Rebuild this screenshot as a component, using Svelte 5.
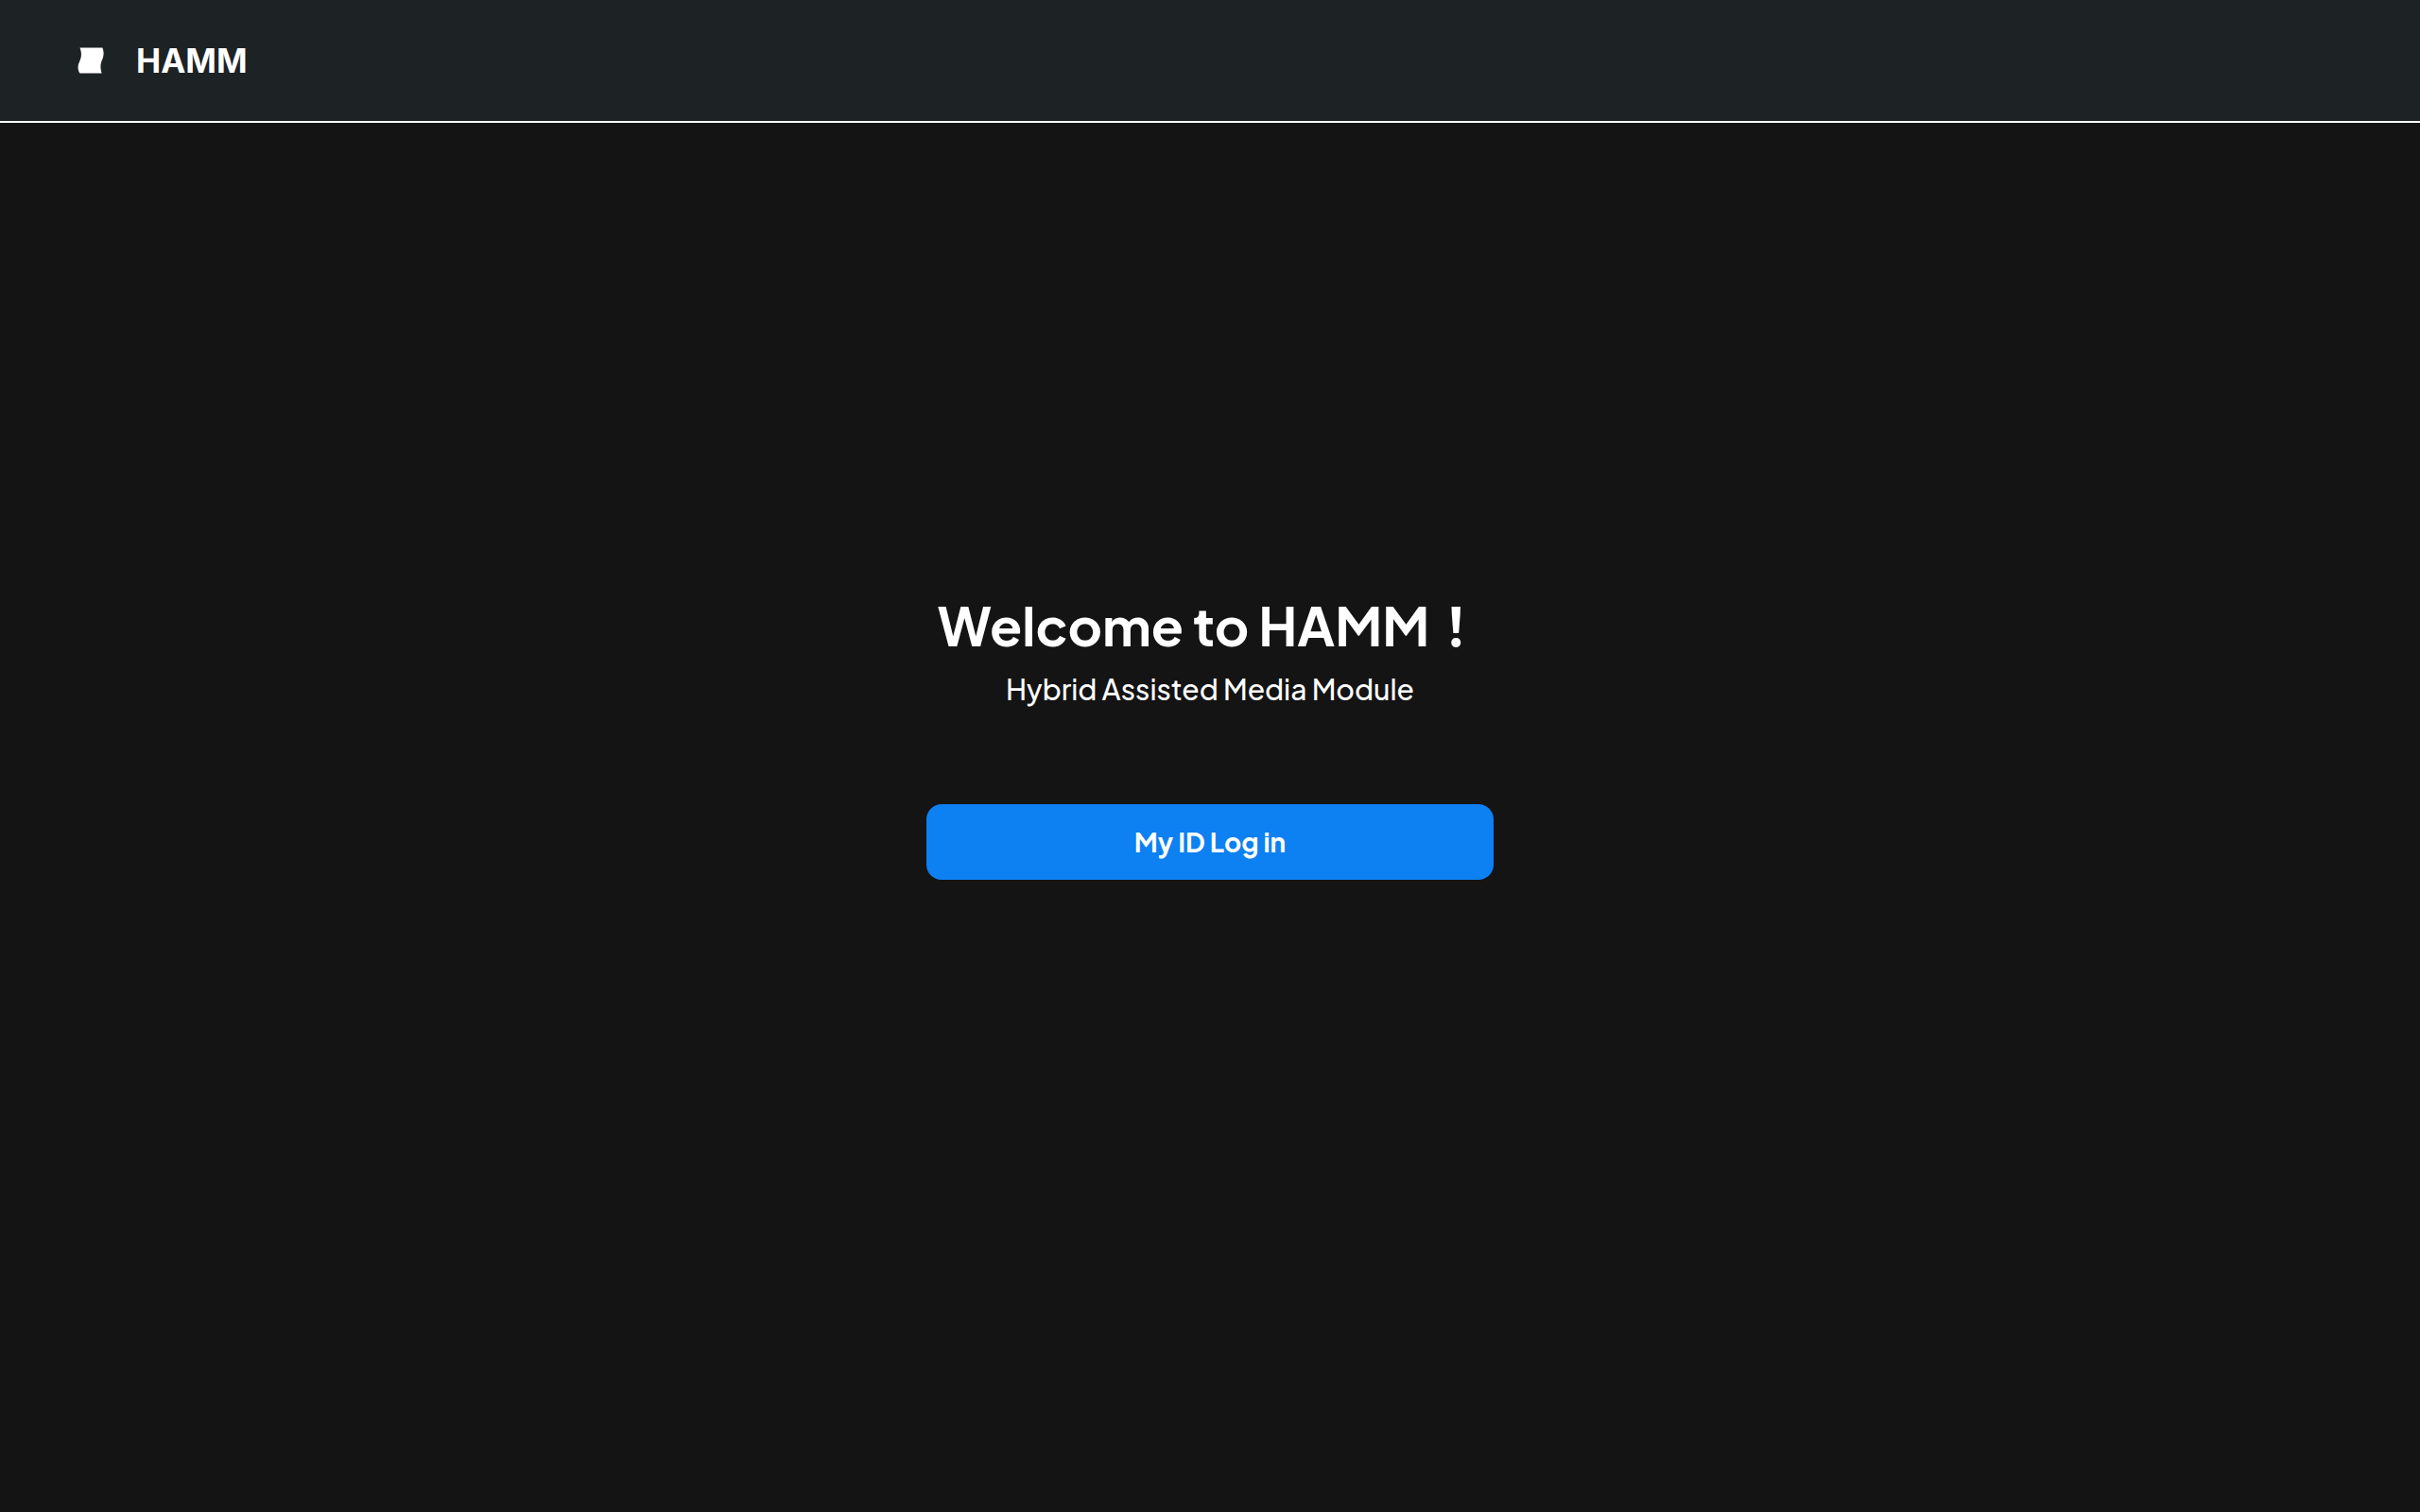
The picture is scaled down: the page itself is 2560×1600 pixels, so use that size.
<script lang="ts">
	const name = 'HAMM';
	const tagline = 'Hybrid Assisted Media Module';
</script>

<div class="page">
	<header class="header">
		<a class="brand" href="/">
			<svg class="brand__icon" viewBox="0 0 28 28" aria-hidden="true">
				<path
					fill="#fff"
					d="M2.5 .4H26.4C28 4.200 28 8 26.600 12C24.400 17 23.600 20.500 25.600 27.600H2.500C0 24 0 19.500 2 15.500C4.400 10 4.600 6 2.500 .4Z"
				/>
			</svg>
			<span>{name}</span>
		</a>
	</header>

	<main class="welcome">
		<h1 class="welcome__title">Welcome to {name}！</h1>
		<p class="welcome__tagline">{tagline}</p>
		<button class="login" type="button">My ID Log in</button>
	</main>
</div>

<style>
	:global(body) {
		background: #141414;
	}
	.page {
		display: flex;
		flex-direction: column;
		min-height: 100vh;
		color: #fff;
		font-family: 'Plus Jakarta Sans', Inter, 'Noto Sans CJK TC', sans-serif;
	}
	.header {
		display: flex;
		align-items: center;
		padding: 40px 82px;
		background: #1d2225;
		border-bottom: 2px solid #fff;
	}
	.brand {
		display: flex;
		align-items: center;
		gap: 34px;
		color: inherit;
		font-family: Inter, sans-serif;
		font-size: 35px;
		font-weight: 700;
		line-height: 48px;
		text-decoration: none;
	}
	.brand__icon {
		width: 28px;
		height: 28px;
	}
	.welcome {
		flex: 1;
		display: flex;
		flex-direction: column;
		align-items: center;
		justify-content: center;
		padding: 0 24px 176px;
	}
	.welcome__title {
		margin: 0;
		font-size: 56px;
		font-weight: 700;
		line-height: 76px;
	}
	.welcome__tagline {
		margin: 10px 0 102px;
		font-size: 30px;
		font-weight: 500;
		line-height: 40px;
	}
	.login {
		width: 100%;
		max-width: 600px;
		height: 80px;
		padding: 0 24px 2px;
		border: 0;
		border-radius: 16px;
		background: #0d80f2;
		color: inherit;
		font: inherit;
		font-size: 28px;
		font-weight: 700;
		cursor: pointer;
	}
</style>
